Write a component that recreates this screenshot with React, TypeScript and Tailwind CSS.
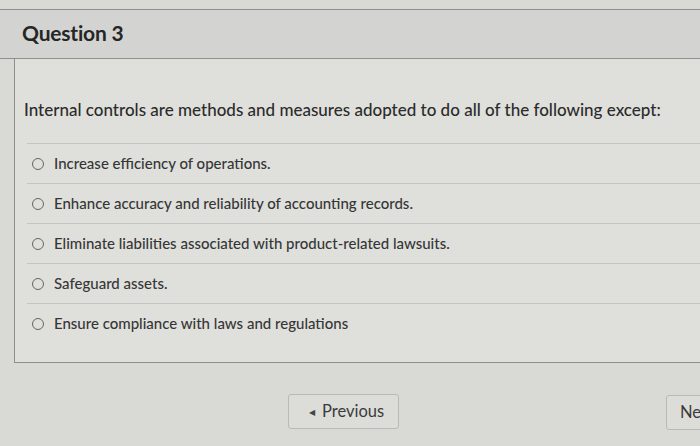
import { useState } from "react";

const options = [
  "Increase efficiency of operations.",
  "Enhance accuracy and reliability of accounting records.",
  "Eliminate liabilities associated with product-related lawsuits.",
  "Safeguard assets.",
  "Ensure compliance with laws and regulations",
];

const App = () => {
  const [picked, setPicked] = useState<number | null>(null);

  return (
    <div
      className="w-[700px] h-[446px] overflow-hidden bg-[#d9dad6] text-[#333]"
      style={{ fontFamily: "Lato, 'Open Sans', sans-serif" }}
    >
      <div className="h-[9px]" />
      <div className="h-[50px] flex items-center pl-[22px] bg-[#d3d4d1] border-t border-b border-[#8f908d]">
        <h2 className="text-[21px] font-bold text-[#262626] tracking-[-0.2px] -mt-[2px]">Question 3</h2>
      </div>

      <div className="ml-[14px] w-[700px] h-[304px] bg-[#dfe0dc] border-l border-b border-[#8f908d]">
        <p className="pt-[40px] pl-[9px] text-[17px] font-medium text-[#2b2b2b] leading-[22px]">
          Internal controls are methods and measures adopted to do all of the following except:
        </p>
        <div className="mt-[22px] ml-[12px]">
          {options.map((o, i) => (
            <label
              key={i}
              onClick={() => setPicked(i)}
              className="h-[40px] flex items-center pl-[5px] cursor-pointer border-t border-[#c4c5c2]"
            >
              <span className="w-[12px] h-[12px] rounded-full border-[1.5px] border-[#646562] flex items-center justify-center">
                {picked === i && <span className="w-[6px] h-[6px] rounded-full bg-[#555]" />}
              </span>
              <span className="ml-[10px] text-[15px] font-medium text-[#363636]">{o}</span>
            </label>
          ))}
        </div>
      </div>

      <div className="relative mt-[31px] h-[36px]">
        <button className="absolute left-[288px] top-0 w-[111px] h-[35px] flex items-center pl-[20px] bg-[#dcddd9] border border-[#b9bab7] rounded-[3px] text-[16.5px] text-[#3a3a3a]">
          <span className="text-[8px] mr-[7px] text-[#444]">◀</span>
          Previous
        </button>
        <button className="absolute left-[666px] top-[1px] w-[80px] h-[35px] flex items-center pl-[13px] bg-[#dcddd9] border border-[#b9bab7] rounded-[3px] text-[16.5px] text-[#3a3a3a]">
          Next
        </button>
      </div>
    </div>
  );
};

export default App;
